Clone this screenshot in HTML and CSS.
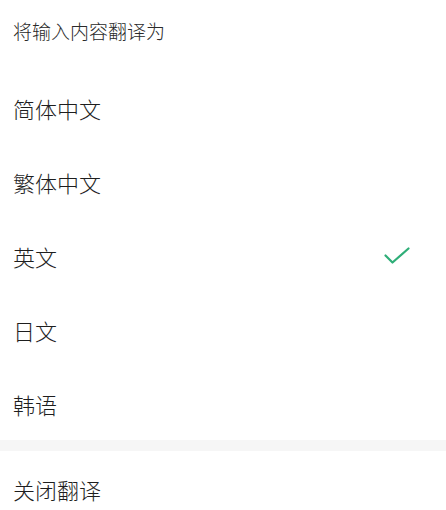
FILE: index.html
```html
<!DOCTYPE html>
<html lang="zh">
<head>
<meta charset="utf-8">
<link rel="stylesheet" href="styles.css">
</head>
<body>
<div class="sheet">
  <div class="title">将输入内容翻译为</div>
  <ul class="options">
    <li class="option">简体中文</li>
    <li class="option">繁体中文</li>
    <li class="option selected">英文
      <svg class="check" width="26" height="18" viewBox="0 0 26 18"><path d="M1.5 8.5 L8.5 15.5 L24.5 1.5" fill="none" stroke="#2fae78" stroke-width="2.2" stroke-linecap="round" stroke-linejoin="round"/></svg>
    </li>
    <li class="option">日文</li>
    <li class="option">韩语</li>
  </ul>
  <div class="divider"></div>
  <div class="option close">关闭翻译</div>
</div>
</body>
</html>
```
FILE: styles.css
```css
html, body {
  margin: 0;
  padding: 0;
  background: #ffffff;
}
body {
  font-family: "Noto Sans CJK SC", "Noto Sans", sans-serif;
  font-weight: 300;
  color: #1e1e1e;
}
.sheet {
  display: flex;
  flex-direction: column;
}
.title {
  height: 71px;
  box-sizing: border-box;
  padding: 19px 0 0 13px;
  font-size: 19px;
  line-height: 24px;
  color: #2a2a2a;
}
.options {
  list-style: none;
  margin: 0;
  padding: 0;
}
.option {
  height: 74px;
  display: flex;
  align-items: center;
  justify-content: space-between;
  padding: 0 36px 0 13px;
  font-size: 22px;
  line-height: 28px;
}
.check {
  display: block;
}
.divider {
  height: 11px;
  margin-top: -1px;
  background: #f6f6f6;
}
.close {
  height: 76px;
}
```
